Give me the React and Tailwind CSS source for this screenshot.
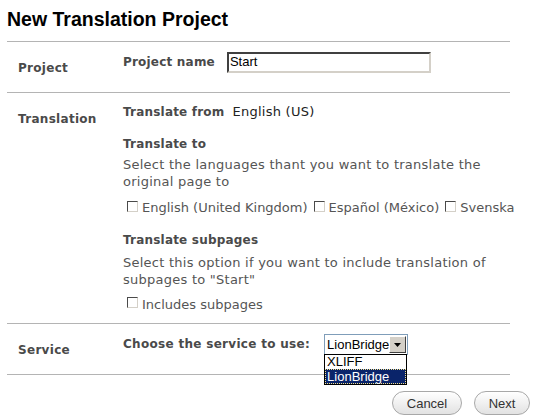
import React from 'react';

const verdana = "font-['Verdana','DejaVu_Sans',sans-serif]";

function Check({ label }) {
  return (
    <span className="inline-flex items-center">
      <span className="inline-block w-[11px] h-[11px] bg-white border border-t-[#4a4a4a] border-l-[#4a4a4a] border-b-[#d4d0c8] border-r-[#d4d0c8] mr-[4px] -mt-[3px]" />
      <span>{label}</span>
    </span>
  );
}

function Row({ label, children, className }) {
  return (
    <div className={`flex border-t border-[#b4b4b4] ${className}`}>
      <div className="w-[116px] shrink-0 pl-[11px] pt-[18px] font-bold text-[12px] tracking-[0.3px] text-[#4a4a4a]">{label}</div>
      <div className="flex-1">{children}</div>
    </div>
  );
}

export default function App() {
  return (
    <div className={`relative w-[534px] h-[420px] bg-white overflow-hidden ${verdana} text-[13px] tracking-[0.25px] leading-[17px] text-[#555]`}>
      <h1 className="pl-[7px] pt-[7px] h-[41px] font-['Liberation_Sans',Arial,sans-serif] font-bold text-[19.5px] tracking-normal leading-[24px] text-black">
        New Translation Project
      </h1>

      <div className="ml-[7px] w-[503px] border-b border-[#b4b4b4]">
        {/* Project */}
        <Row label="Project" className="h-[51px]">
          <div className="flex items-center pt-[10px]">
            <span className="font-bold text-[12px] tracking-[0.2px] text-[#4a4a4a] mr-[12px]">Project name</span>
            <div className="w-[204px] h-[21px] border-2 border-t-[#404040] border-l-[#404040] border-b-[#d4d0c8] border-r-[#d4d0c8] bg-white font-['Liberation_Sans',Arial,sans-serif] text-[13px] tracking-normal text-black leading-[16px] px-[1px]">
              Start
            </div>
          </div>
        </Row>

        {/* Translation */}
        <Row label="Translation" className="h-[231px]">
          <div className="pt-[10px]">
            <div>
              <span className="font-bold text-[12px] tracking-[0.2px] text-[#4a4a4a] mr-[8px]">Translate from</span>
              <span className="text-[#222]">English (US)</span>
            </div>
            <div className="font-bold text-[12px] tracking-[0.2px] text-[#4a4a4a] mt-[15px]">Translate to</div>
            <div className="mt-[3px] pr-[6px]">Select the languages thant you want to translate the original page to</div>
            <div className="mt-[9px] flex gap-[6px] whitespace-nowrap pl-[4px] tracking-normal">
              <Check label="English (United Kingdom)" />
              <Check label="Español (México)" />
              <Check label="Svenska" />
            </div>
            <div className="font-bold text-[12px] tracking-[0.2px] text-[#4a4a4a] mt-[16px]">Translate subpages</div>
            <div className="mt-[5px] pr-[6px]">Select this option if you want to include translation of subpages to "Start"</div>
            <div className="mt-[7px] pl-[4px] tracking-normal">
              <Check label="Includes subpages" />
            </div>
          </div>
        </Row>

        {/* Service */}
        <Row label="Service" className="h-[51px]">
          <div className="flex items-center pt-[10px]">
            <span className="font-bold text-[12px] tracking-[0.3px] text-[#4a4a4a] mr-[14px]">Choose the service to use:</span>
            <div className="relative w-[84px] h-[21px] border border-[#7f9db9] bg-white flex items-center font-['Liberation_Sans',Arial,sans-serif] text-[13px] tracking-normal text-black">
              <span className="flex-1 pl-[2px] leading-[16px]">LionBridge</span>
              <span className="w-[17px] h-[17px] mr-[1px] bg-[#d4d0c8] border border-t-white border-l-white border-b-[#404040] border-r-[#404040] flex items-center justify-center">
                <svg width="7" height="4" viewBox="0 0 7 4"><path d="M0 0h7L3.5 4z" fill="#000" /></svg>
              </span>
              <div className="absolute left-[-1px] top-[19px] w-[83px] border border-black bg-white z-10">
                <div className="h-[14px] leading-[14px] pl-[2px]">XLIFF</div>
                <div className="h-[15px] leading-[13px] pl-[1px] bg-[#0a246a] text-white border border-dotted border-[#f2e08a]">LionBridge</div>
              </div>
            </div>
          </div>
        </Row>
      </div>

      <div className="flex justify-end gap-[12px] pr-[4px] pt-[16px] font-['Liberation_Sans',Arial,sans-serif] text-[13px] tracking-normal text-[#333]">
        <button className="w-[70px] h-[24px] rounded-full border border-[#a8a8a8] bg-gradient-to-b from-white to-[#e2e2e2]">Cancel</button>
        <button className="w-[56px] h-[24px] rounded-full border border-[#a8a8a8] bg-gradient-to-b from-white to-[#e2e2e2]">Next</button>
      </div>
    </div>
  );
}
